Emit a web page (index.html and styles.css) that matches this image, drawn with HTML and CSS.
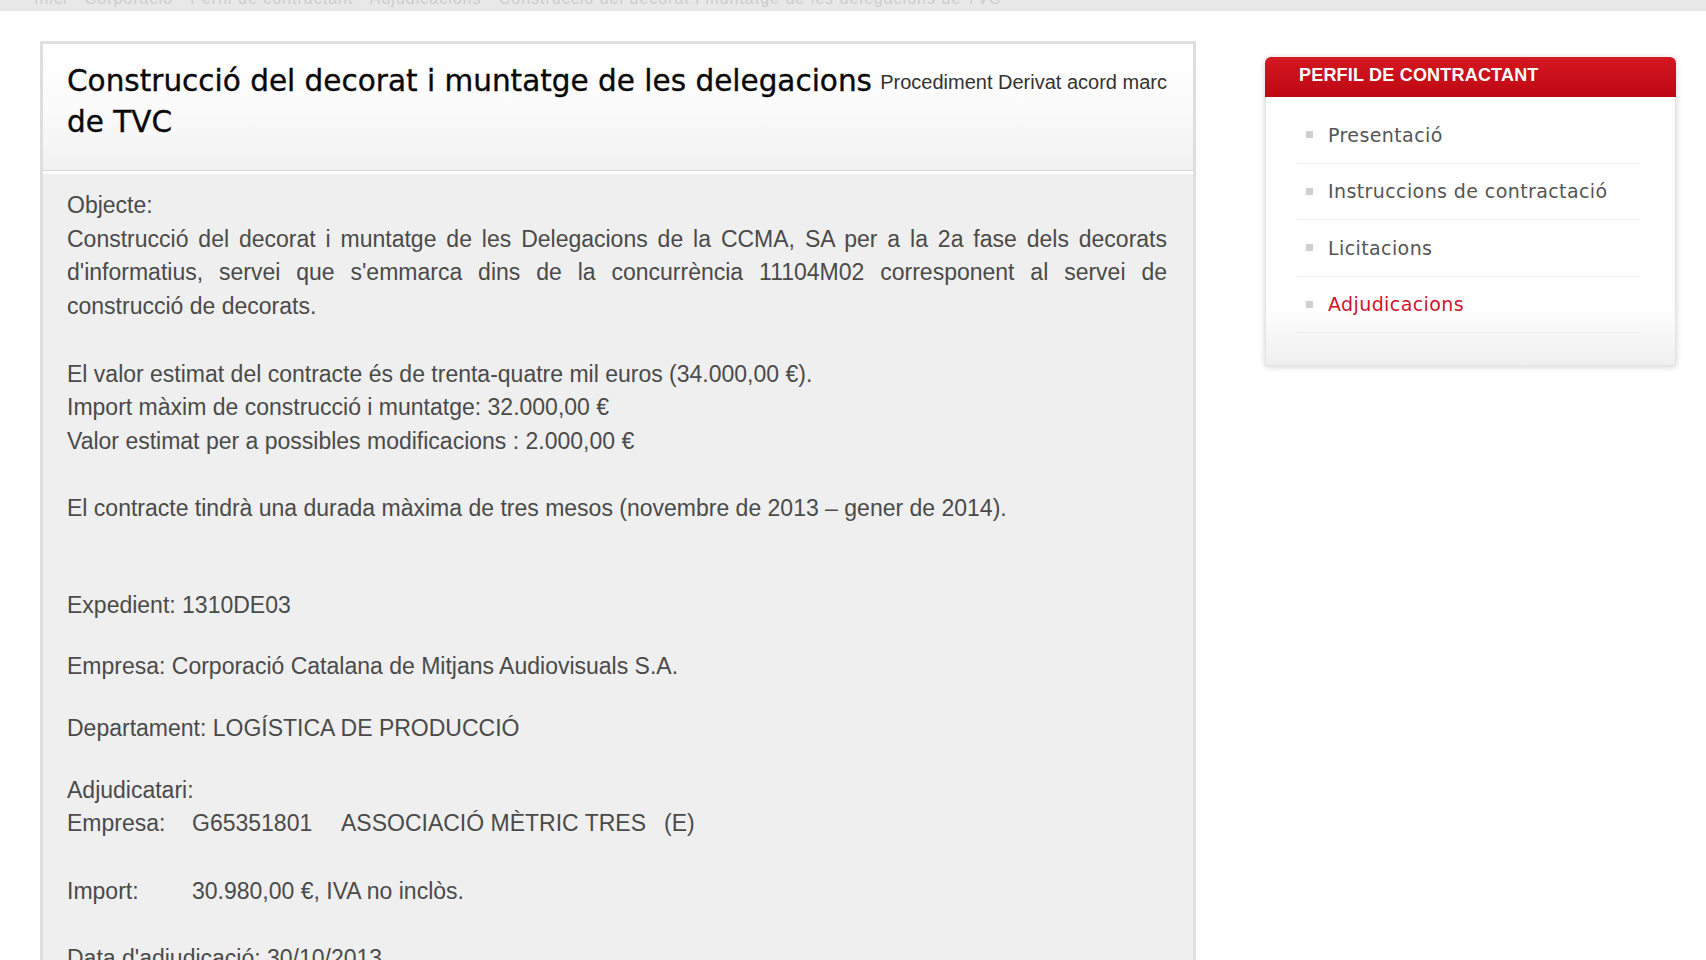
FILE: index.html
```html
<!DOCTYPE html>
<html lang="ca">
<head>
<meta charset="utf-8">
<title>Construcció del decorat i muntatge de les delegacions de TVC</title>
<link rel="stylesheet" href="styles.css">
</head>
<body>
<div class="topbar"><span class="crumbs">Inici · Corporació · Perfil de contractant · Adjudicacions · Construcció del decorat i muntatge de les delegacions de TVC</span></div>
<div class="page">
  <main class="card">
    <header class="card-head">
      <h1 class="title">Construcció del decorat i muntatge de les delegacions de TVC</h1>
      <span class="proc">Procediment Derivat acord marc</span>
    </header>
    <section class="card-body">
      <p class="block">Objecte:<br><span class="justify">Construcció del decorat i muntatge de les Delegacions de la CCMA, SA per a la 2a fase dels decorats d'informatius, servei que s'emmarca dins de la concurrència 11104M02 corresponent al servei de construcció de decorats.</span></p>
      <p class="block">El valor estimat del contracte és de trenta-quatre mil euros (34.000,00 €).<br>Import màxim de construcció i muntatge: 32.000,00 €<br>Valor estimat per a possibles modificacions : 2.000,00 €</p>
      <p class="block wide">El contracte tindrà una durada màxima de tres mesos (novembre de 2013 – gener de 2014).</p>
      <p class="block tight">Expedient: 1310DE03</p>
      <p class="block tight">Empresa: Corporació Catalana de Mitjans Audiovisuals S.A.</p>
      <p class="block tight">Departament: LOGÍSTICA DE PRODUCCIÓ</p>
      <p class="block">Adjudicatari:<br><span class="lbl">Empresa:</span><span class="nif">G65351801</span><span>ASSOCIACIÓ MÈTRIC TRES</span><span class="tag">(E)</span></p>
      <p class="block"><span class="lbl">Import:</span>30.980,00 €, IVA no inclòs.</p>
      <p class="block">Data d'adjudicació: 30/10/2013</p>
    </section>
  </main>
  <aside class="side">
    <div class="side-head">PERFIL DE CONTRACTANT</div>
    <ul class="side-list">
      <li class="side-item"><span class="bullet"></span>Presentació</li>
      <li class="side-item"><span class="bullet"></span>Instruccions de contractació</li>
      <li class="side-item"><span class="bullet"></span>Licitacions</li>
      <li class="side-item active"><span class="bullet"></span>Adjudicacions</li>
    </ul>
  </aside>
</div>
</body>
</html>
```
FILE: styles.css
```css
html, body {
  margin: 0;
  padding: 0;
  background: #ffffff;
}
body {
  font-family: "Liberation Sans", Arial, sans-serif;
  overflow: hidden;
  height: 960px;
}
.topbar {
  height: 11px;
  background: #e8e8e8;
  overflow: hidden;
  padding-left: 34px;
}
.crumbs {
  display: block;
  font-size: 16px;
  line-height: 16px;
  margin-top: -9px;
  color: #cdcdcd;
  letter-spacing: 1px;
  white-space: nowrap;
}
.page {
  display: flex;
  align-items: flex-start;
  padding: 30px 0 0 40px;
  gap: 67px;
}
.card {
  width: 1156px;
  flex: none;
  border: 3px solid #dfdfdf;
  border-bottom: none;
  box-sizing: border-box;
  background: #efefef;
}
.card-head {
  display: flex;
  align-items: flex-start;
  padding: 17px 26px 27px 24px;
  background: linear-gradient(#ffffff 0%, #fbfbfb 50%, #f1f1f1 100%);
  border-bottom: 1px solid #dadada;
}
.title {
  margin: 0;
  width: 820px;
  font-family: "DejaVu Sans", Verdana, sans-serif;
  font-weight: normal;
  font-size: 29.5px;
  line-height: 41px;
  color: #080808;
  -webkit-text-stroke: 0.35px #080808;
}
.proc {
  margin-left: auto;
  margin-top: 9px;
  font-size: 20px;
  line-height: 24px;
  color: #333;
  letter-spacing: 0;
  white-space: nowrap;
}
.card-body {
  border-top: 3px solid #ffffff;
  padding: 15px 26px 0 24px;
  font-size: 23px;
  line-height: 33.7px;
  color: #4a4a4a;
}
.block {
  margin: 0 0 33.7px;
}
.block.tight {
  margin-bottom: 28px;
}
.block.wide {
  margin-bottom: 62.5px;
}
.justify {
  display: block;
  text-align: justify;
}
.lbl {
  display: inline-block;
  width: 125px;
}
.nif {
  display: inline-block;
  width: 149px;
}
.tag {
  margin-left: 18px;
}
.side {
  width: 411px;
  flex: none;
  margin-top: 16px;
  margin-left: 2px;
  background: #fff;
  border-radius: 6px 6px 2px 2px;
  box-shadow: 0 1px 6px rgba(0, 0, 0, 0.18);
}
.side-head {
  height: 40px;
  line-height: 37px;
  padding-left: 34px;
  background: linear-gradient(#d51822, #bd0711);
  border-radius: 6px 6px 0 0;
  color: #fff;
  font-weight: bold;
  font-size: 18px;
  letter-spacing: 0.2px;
}
.side-list {
  list-style: none;
  margin: 0;
  padding: 10px 35px 32px 31px;
  background: linear-gradient(#ffffff 0%, #ffffff 78%, #efefef 100%);
  border: 1px solid #e4e4e4;
  border-top: none;
}
.side-item {
  display: flex;
  align-items: center;
  height: 55.5px;
  border-bottom: 1px solid #ececec;
  font-family: "DejaVu Sans", Verdana, sans-serif;
  font-size: 19px;
  letter-spacing: 0.4px;
  color: #555;
}
.bullet {
  width: 7px;
  height: 7px;
  margin-left: 9px;
  margin-right: 15px;
  background: #cfcfcf;
  flex: none;
}
.side-item.active {
  color: #d0132c;
}
```
